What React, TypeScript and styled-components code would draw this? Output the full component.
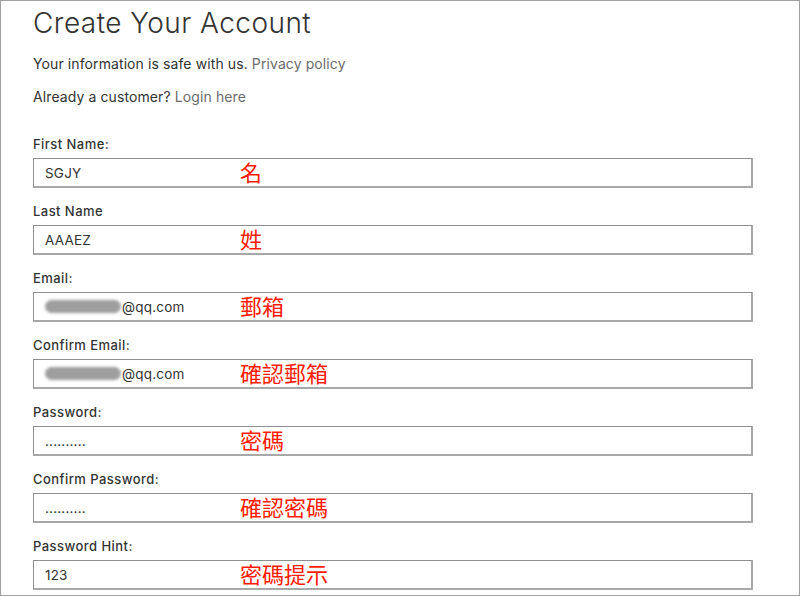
import * as React from 'react'
import styled, { createGlobalStyle } from 'styled-components'

const GlobalStyle = createGlobalStyle`
    html, body {
        margin: 0;
        padding: 0;
        background: #fff;
    }
    * {
        box-sizing: border-box;
    }
`

interface Field {
    label: string
    value: string
    note: string
    masked?: boolean
}

const fields: Field[] = [
    { label: 'First Name:', value: 'SGJY', note: '名' },
    { label: 'Last Name', value: 'AAAEZ', note: '姓' },
    { label: 'Email:', value: '@qq.com', note: '郵箱', masked: true },
    { label: 'Confirm Email:', value: '@qq.com', note: '確認郵箱', masked: true },
    { label: 'Password:', value: '..........', note: '密碼' },
    { label: 'Confirm Password:', value: '..........', note: '確認密碼' },
    { label: 'Password Hint:', value: '123', note: '密碼提示' },
]

const Frame = styled.div`
    width: 800px;
    height: 596px;
    overflow: hidden;
    border: 1px solid #a0a0a0;
    padding: 0 46px 0 32px;
    font-family: Inter, 'Open Sans', sans-serif;
    color: #333;
`

const Title = styled.h1`
    margin: 0;
    font-size: 28px;
    line-height: 44px;
    font-weight: 300;
    letter-spacing: 0.45px;
    color: #333;
`

const Line = styled.p<{ $gap: number }>`
    margin: ${(p) => p.$gap}px 0 0;
    font-size: 14px;
    line-height: 20px;
    letter-spacing: 0.1px;
    color: #333;
`

const Link = styled.a`
    color: #6b6b6b;
    text-decoration: none;
`

const Form = styled.div`
    margin-top: 27px;
    display: flex;
    flex-direction: column;
    gap: 13px;
`

const FieldBlock = styled.div`
    display: flex;
    flex-direction: column;
    gap: 4px;
`

const Label = styled.div`
    font-size: 13px;
    line-height: 20px;
    font-weight: 500;
    letter-spacing: 0.45px;
    color: #333;
`

const InputBox = styled.div`
    height: 30px;
    border: 1px solid #8f8f8f;
    border-right: 2px solid #a8a8a8;
    border-bottom: 2px solid #a8a8a8;
    display: grid;
    grid-template-columns: 195px 1fr;
    align-items: center;
    padding-left: 11px;
`

const Value = styled.span`
    display: flex;
    align-items: center;
    font-size: 13.5px;
    letter-spacing: 0.2px;
    color: #333;
`

const Blur = styled.span`
    display: inline-block;
    width: 76px;
    height: 13px;
    border-radius: 7px;
    background: #9e9e9e;
    filter: blur(1.5px);
    margin-right: 1px;
`

const Note = styled.span`
    font-family: 'Noto Sans CJK TC', 'Noto Sans CJK SC', sans-serif;
    font-size: 22px;
    line-height: 26px;
    color: #ff1a00;
    margin-top: -3px;
`

const App: React.FC = () => (
    <Frame>
        <GlobalStyle />
        <Title>Create Your Account</Title>
        <Line $gap={9}>
            Your information is safe with us. <Link>Privacy policy</Link>
        </Line>
        <Line $gap={13}>
            Already a customer? <Link>Login here</Link>
        </Line>
        <Form>
            {fields.map((field) => (
                <FieldBlock key={field.label}>
                    <Label>{field.label}</Label>
                    <InputBox>
                        <Value>
                            {field.masked && <Blur />}
                            {field.value}
                        </Value>
                        <Note>{field.note}</Note>
                    </InputBox>
                </FieldBlock>
            ))}
        </Form>
    </Frame>
)

export default App
